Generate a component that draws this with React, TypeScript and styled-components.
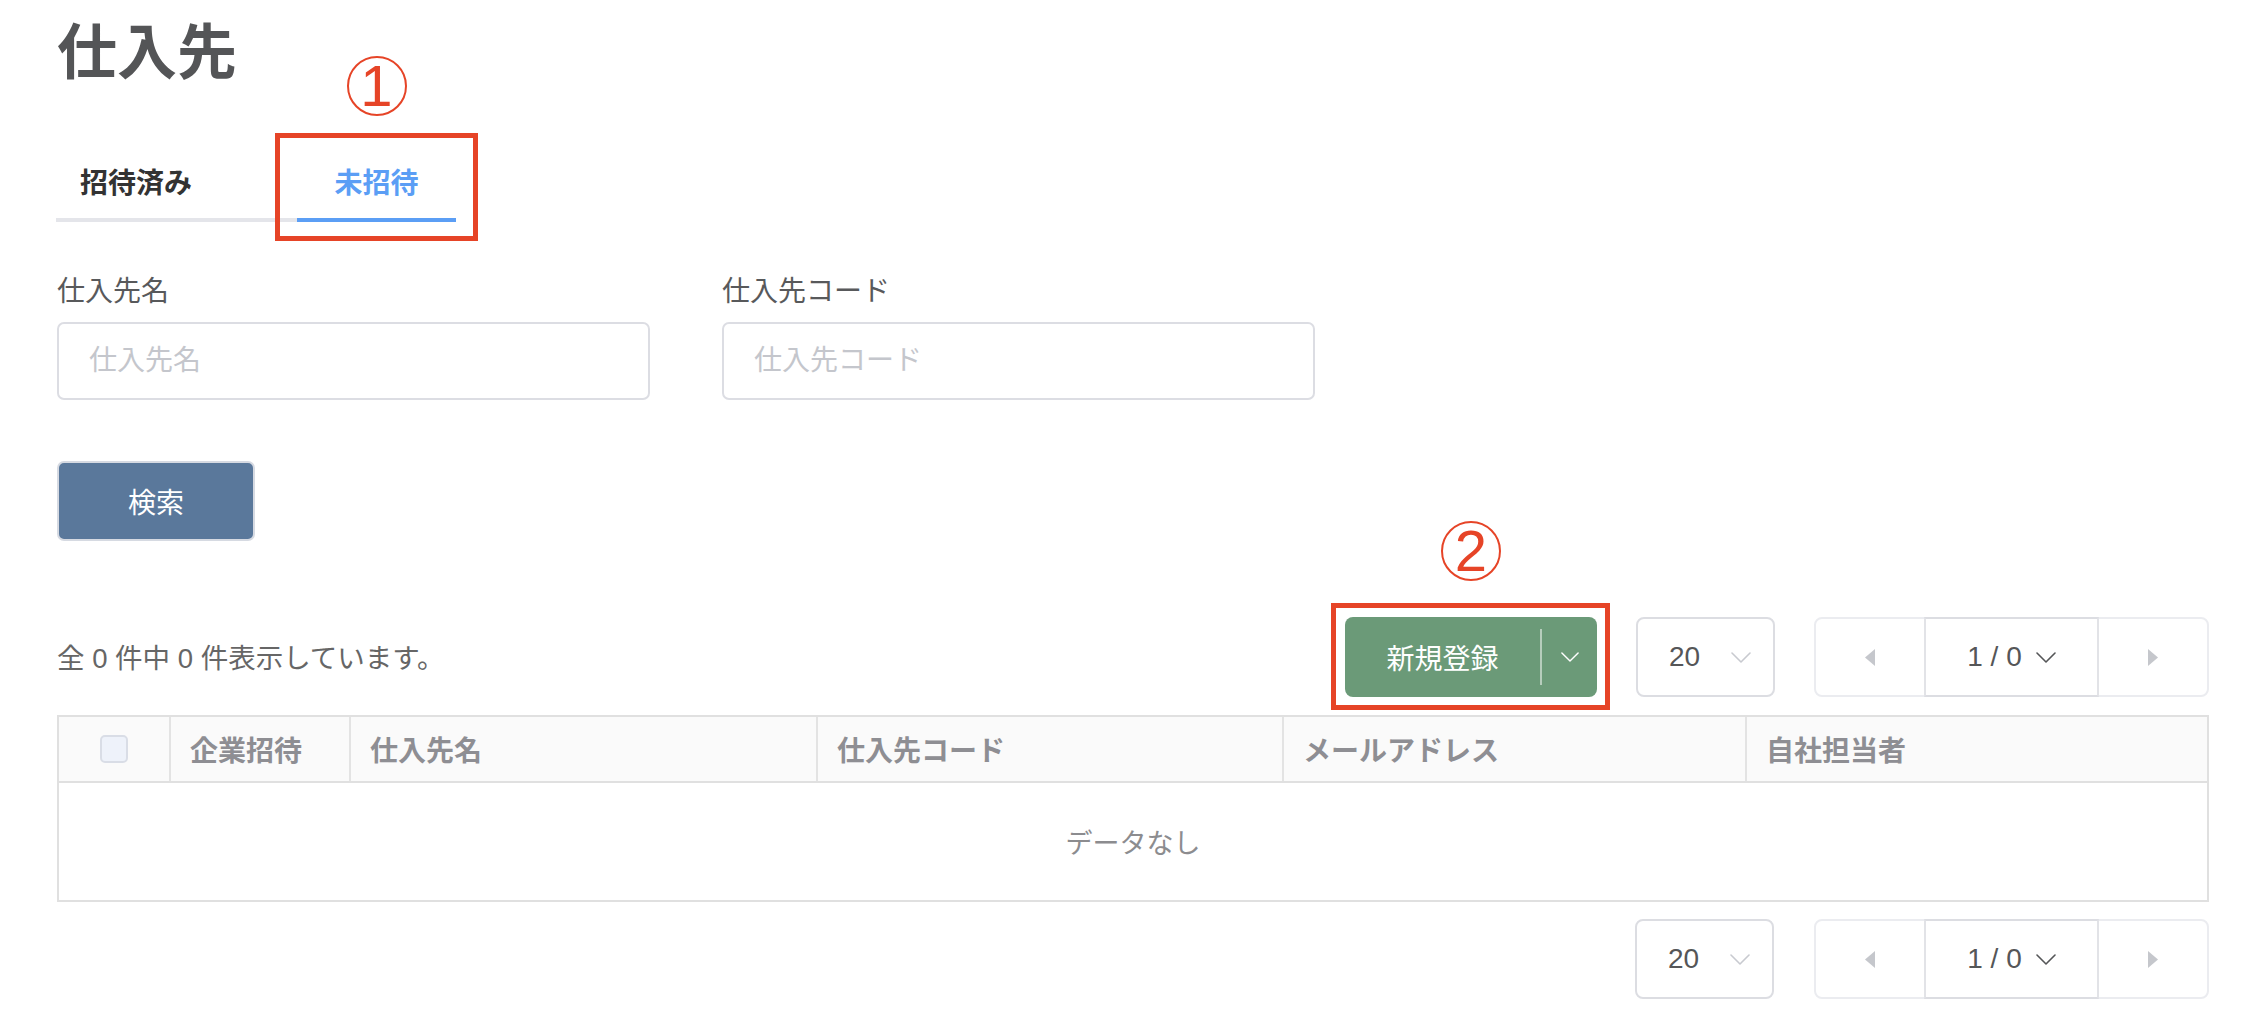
import React from "react";
import styled, { createGlobalStyle } from "styled-components";

const GlobalStyle = createGlobalStyle`
  html, body { margin: 0; padding: 0; background: #ffffff; }
  body {
    font-family: "Liberation Sans", "Noto Sans CJK JP", sans-serif;
    -webkit-font-smoothing: antialiased;
  }
  * { box-sizing: border-box; }
`;

const RED = "#e64427";

const Page = styled.div`
  width: 2262px;
  padding: 24px 53px 28px 57px;
`;

const Title = styled.h1`
  margin: 0;
  font-size: 60px;
  line-height: 60px;
  font-weight: 700;
  color: #545557;
`;

const TabBar = styled.div`
  display: inline-flex;
  margin-top: 66px;
  margin-left: -1px;
  border-bottom: 4px solid #e4e5ea;
`;

const Tab = styled.div<{ $active?: boolean; $width: number; $center?: boolean }>`
  position: relative;
  width: ${(p) => p.$width}px;
  padding: 20px ${(p) => (p.$center ? "0" : "24px")} 20px;
  margin-bottom: -4px;
  border-bottom: 4px solid ${(p) => (p.$active ? "#5b9ef5" : "transparent")};
  font-size: 28px;
  line-height: 28px;
  font-weight: 600;
  color: ${(p) => (p.$active ? "#5b9ef5" : "#333333")};
  text-align: ${(p) => (p.$center ? "center" : "left")};
`;

const Marker = styled.span<{ $top: number }>`
  position: absolute;
  left: 50%;
  top: ${(p) => p.$top}px;
  transform: translateX(-50%);
  width: 60px;
  height: 60px;
  border: 2px solid ${RED};
  border-radius: 50%;
  display: flex;
  align-items: center;
  justify-content: center;
  color: ${RED};
  font-family: "Liberation Sans", sans-serif;
  font-size: 58px;
  line-height: 1;
  font-weight: 400;
`;

const Highlight = styled.span<{ $t: number; $r: number; $b: number; $l: number }>`
  position: absolute;
  top: ${(p) => p.$t}px;
  right: ${(p) => p.$r}px;
  bottom: ${(p) => p.$b}px;
  left: ${(p) => p.$l}px;
  border: 5px solid ${RED};
  pointer-events: none;
`;

const FormRow = styled.div`
  display: flex;
  gap: 72px;
  margin-top: 56px;
`;

const Field = styled.div`
  display: flex;
  flex-direction: column;
  gap: 16px;
  width: 593px;
`;

const Label = styled.label`
  font-size: 28px;
  line-height: 28px;
  color: #58595b;
`;

const Input = styled.input`
  height: 78px;
  width: 100%;
  border: 2px solid #dcdde3;
  border-radius: 7px;
  padding: 0 30px;
  font-family: inherit;
  font-size: 28px;
  color: #333;
  outline: none;
  &::placeholder { color: #c4c6cc; }
`;

const SearchButton = styled.button`
  display: block;
  margin-top: 61px;
  width: 198px;
  height: 80px;
  border: 2px solid #d6dae2;
  border-radius: 7px;
  background: #5a789b;
  color: #ffffff;
  font-family: inherit;
  font-size: 28px;
`;

const Toolbar = styled.div`
  display: flex;
  align-items: center;
  justify-content: space-between;
  margin-top: 76px;
  height: 80px;
`;

const Count = styled.div`
  font-size: 27.5px;
  line-height: 28px;
  color: #666666;
  padding-top: 4px;
`;

const RightGroup = styled.div`
  display: flex;
  align-items: center;
  gap: 39px;
`;

const SplitWrap = styled.div`
  position: relative;
`;

const SplitButton = styled.div`
  display: flex;
  align-items: stretch;
  width: 252px;
  height: 80px;
  border-radius: 8px;
  background: #6b9a78;
  color: #ffffff;
  font-size: 28px;
`;

const SplitMain = styled.div`
  width: 195px;
  display: flex;
  align-items: center;
  justify-content: center;
`;

const SplitDivider = styled.div`
  width: 2px;
  margin: 12px 0;
  background: #b6cdbc;
`;

const SplitArrow = styled.div`
  flex: 1;
  display: flex;
  align-items: center;
  justify-content: center;
`;

const SizeSelect = styled.div`
  display: flex;
  align-items: center;
  justify-content: space-between;
  width: 139px;
  height: 80px;
  border: 2px solid #dcdde2;
  border-radius: 8px;
  padding: 0 22px 0 31px;
  font-size: 28px;
  color: #555658;
`;

const Pager = styled.div`
  display: flex;
  width: 395px;
  height: 80px;
  border: 2px solid #ebecf0;
  border-radius: 8px;
`;

const PagerSide = styled.div`
  flex: 1;
  display: flex;
  align-items: center;
  justify-content: center;
`;

const PagerMid = styled.div`
  width: 175px;
  margin: -2px 0;
  border: 2px solid #e2e3e7;
  border-top-color: #dcdde2;
  border-bottom-color: #dcdde2;
  display: flex;
  align-items: center;
  justify-content: center;
  gap: 14px;
  font-size: 28px;
  color: #555658;
`;

const Table = styled.div`
  margin-top: 18px;
  border: 2px solid #e0e0e0;
`;

const HeadRow = styled.div`
  display: grid;
  grid-template-columns: 110px 180px 467px 466px 463px 1fr;
  height: 66px;
  background: #fafafa;
  border-bottom: 2px solid #e0e0e0;
`;

const HeadCell = styled.div<{ $first?: boolean }>`
  display: flex;
  align-items: center;
  justify-content: ${(p) => (p.$first ? "center" : "flex-start")};
  padding-left: ${(p) => (p.$first ? 0 : 19)}px;
  border-left: ${(p) => (p.$first ? "none" : "2px solid #e3e3e3")};
  font-size: 28px;
  font-weight: 700;
  color: #8e8e93;
`;

const Checkbox = styled.span`
  width: 28px;
  height: 28px;
  border: 2px solid #d9dde6;
  border-radius: 5px;
  background: #eef2fa;
`;

const Empty = styled.div`
  height: 117px;
  display: flex;
  align-items: center;
  justify-content: center;
  font-size: 27px;
  color: #8c8c8f;
`;

const BottomBar = styled.div`
  display: flex;
  justify-content: flex-end;
  gap: 40px;
  margin-top: 17px;
`;

const Chevron = ({ color, w = 20, h = 11 }: { color: string; w?: number; h?: number }) => (
  <svg width={w} height={h} viewBox="0 0 20 11" fill="none">
    <polyline points="1,1 10,10 19,1" stroke={color} strokeWidth="1.6" strokeLinejoin="round" strokeLinecap="round" />
  </svg>
);

const Triangle = ({ dir }: { dir: "left" | "right" }) => (
  <svg width={10} height={17} viewBox="0 0 10 17">
    <polygon points={dir === "left" ? "10,0 0,8.5 10,17" : "0,0 10,8.5 0,17"} fill="#c5c7cc" />
  </svg>
);

const Pagination = () => (
  <>
    <SizeSelect>
      <span>20</span>
      <Chevron color="#c8cad0" />
    </SizeSelect>
    <Pager>
      <PagerSide>
        <Triangle dir="left" />
      </PagerSide>
      <PagerMid>
        <span>1 / 0</span>
        <Chevron color="#555658" />
      </PagerMid>
      <PagerSide>
        <Triangle dir="right" />
      </PagerSide>
    </Pager>
  </>
);

const columns = ["企業招待", "仕入先名", "仕入先コード", "メールアドレス", "自社担当者"];

export default function App() {
  return (
    <>
      <GlobalStyle />
      <Page>
        <Title>仕入先</Title>
        <div>
          <TabBar>
            <Tab $width={241}>招待済み</Tab>
            <Tab $width={159} $center $active>
              未招待
              <Marker $top={-94}>1</Marker>
              <Highlight $t={-17} $r={-22} $b={-23} $l={-22} />
            </Tab>
          </TabBar>
        </div>
        <FormRow>
          <Field>
            <Label>仕入先名</Label>
            <Input placeholder="仕入先名" />
          </Field>
          <Field>
            <Label>仕入先コード</Label>
            <Input placeholder="仕入先コード" />
          </Field>
        </FormRow>
        <SearchButton>検索</SearchButton>
        <Toolbar>
          <Count>全 0 件中 0 件表示しています。</Count>
          <RightGroup>
            <SplitWrap>
              <SplitButton>
                <SplitMain>新規登録</SplitMain>
                <SplitDivider />
                <SplitArrow>
                  <Chevron color="#ffffff" w={18} h={10} />
                </SplitArrow>
              </SplitButton>
              <Marker $top={-96}>2</Marker>
              <Highlight $t={-14} $r={-13} $b={-13} $l={-14} />
            </SplitWrap>
            <Pagination />
          </RightGroup>
        </Toolbar>
        <Table>
          <HeadRow>
            <HeadCell $first>
              <Checkbox />
            </HeadCell>
            {columns.map((c) => (
              <HeadCell key={c}>{c}</HeadCell>
            ))}
          </HeadRow>
          <Empty>データなし</Empty>
        </Table>
        <BottomBar>
          <Pagination />
        </BottomBar>
      </Page>
    </>
  );
}
